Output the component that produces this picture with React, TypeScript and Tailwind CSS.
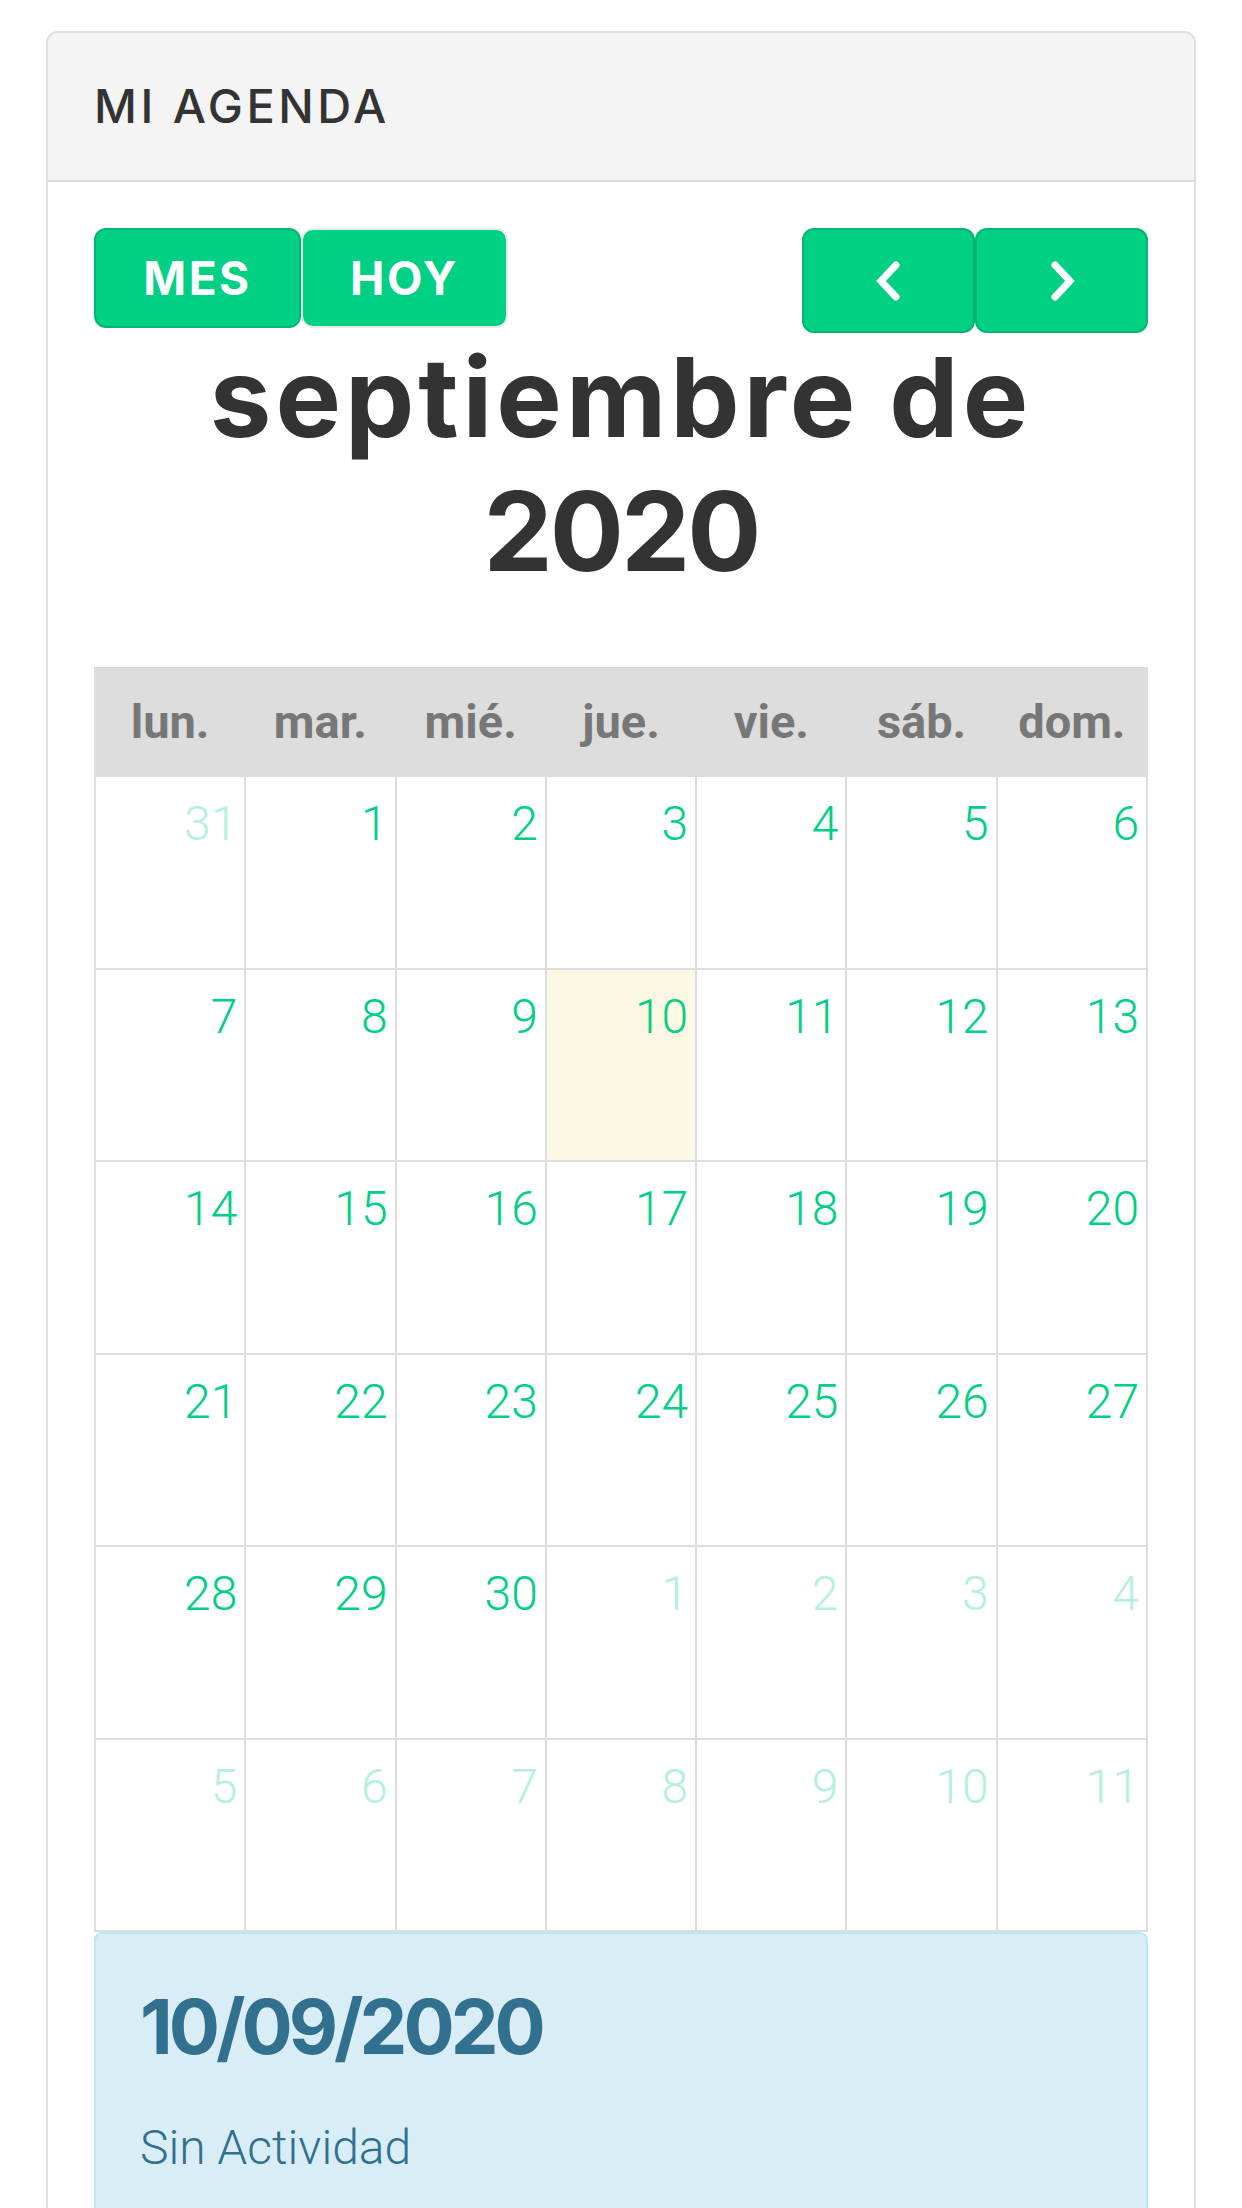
import { ReactNode } from "react"

const weekDays = ["lun.", "mar.", "mié.", "jue.", "vie.", "sáb.", "dom."]

type Day = { n: number; other?: boolean; today?: boolean }

const weeks: Day[][] = [
    [{ n: 31, other: true }, { n: 1 }, { n: 2 }, { n: 3 }, { n: 4 }, { n: 5 }, { n: 6 }],
    [{ n: 7 }, { n: 8 }, { n: 9 }, { n: 10, today: true }, { n: 11 }, { n: 12 }, { n: 13 }],
    [{ n: 14 }, { n: 15 }, { n: 16 }, { n: 17 }, { n: 18 }, { n: 19 }, { n: 20 }],
    [{ n: 21 }, { n: 22 }, { n: 23 }, { n: 24 }, { n: 25 }, { n: 26 }, { n: 27 }],
    [{ n: 28 }, { n: 29 }, { n: 30 }, { n: 1, other: true }, { n: 2, other: true }, { n: 3, other: true }, { n: 4, other: true }],
    [5, 6, 7, 8, 9, 10, 11].map((n) => ({ n, other: true })),
]

const GreenButton = ({ children, className }: { children: ReactNode; className: string }) => (
    <button
        className={`flex items-center justify-center rounded-[12px] bg-[#00d084] border-2 border-[#02b672] text-white ${className}`}>
        {children}
    </button>
)

const Chevron = ({ left }: { left?: boolean }) => (
    <svg width="30" height="42" viewBox="0 0 30 42">
        <polyline
            points={left ? "22,5 7,21 22,37" : "8,5 23,21 8,37"}
            fill="none"
            stroke="#fff"
            strokeWidth="7"
            strokeLinecap="round"
            strokeLinejoin="miter"
        />
    </svg>
)

const App = () => {
    return (
        <div className="min-h-screen bg-white pt-[31px] px-[46px] font-['Inter',sans-serif]">
            <div className="border-2 border-[#dddddd] rounded-[12px] overflow-hidden">
                {/* card header */}
                <div className="h-[149px] bg-[#f4f4f4] border-b-2 border-[#dddddd] flex items-center px-[46px]">
                    <span className="text-[47px] font-medium text-[#333333] tracking-[3.5px]">MI AGENDA</span>
                </div>

                <div className="px-[46px] pt-[46px]">
                    {/* toolbar */}
                    <div className="flex justify-between items-start">
                        <div className="flex">
                            <GreenButton className="w-[207px] h-[100px] text-[46px] font-bold tracking-[2.5px]">MES</GreenButton>
                            <GreenButton className="w-[207px] h-[100px] text-[46px] font-bold tracking-[2.5px] border-[#e4ecea]">HOY</GreenButton>
                        </div>
                        <div className="flex">
                            <GreenButton className="w-[173px] h-[105px]">
                                <Chevron left />
                            </GreenButton>
                            <GreenButton className="w-[173px] h-[105px]">
                                <Chevron />
                            </GreenButton>
                        </div>
                    </div>

                    <h2 className="text-center text-[110px] leading-[134px] font-bold text-[#333333] tracking-[4px] -mt-[3px] px-[40px]">
                        septiembre de <span className="tracking-[-3px]">2020</span>
                    </h2>

                    {/* calendar grid */}
                    <div className="mt-[69px] border-l-2 border-t-2 border-[#dddddd] font-['Roboto',sans-serif]">
                        <div className="grid grid-cols-7 bg-[#dddddd]">
                            {weekDays.map((d) => (
                                <div
                                    key={d}
                                    className="h-[108px] flex items-center justify-center border-r-2 border-b-2 border-[#dddddd] text-[47px] font-bold text-[#777777]">
                                    {d}
                                </div>
                            ))}
                        </div>
                        {weeks.map((week, i) => (
                            <div key={i} className="grid grid-cols-7">
                                {week.map((day, j) => (
                                    <div
                                        key={j}
                                        className={`h-[192.5px] border-r-2 border-b-2 border-[#dddddd] flex justify-end pr-[7px] pt-[17px] ${
                                            day.today ? "bg-[#fcf8e3]" : "bg-white"
                                        }`}>
                                        <span
                                            className={`text-[48px] font-light leading-[60px] ${
                                                day.other ? "text-[#b3f1da]" : "text-[#00d084]"
                                            }`}>
                                            {day.n}
                                        </span>
                                    </div>
                                ))}
                            </div>
                        ))}
                    </div>

                    {/* selected day */}
                    <div className="bg-[#d9edf7] border-2 border-[#bce8f1] rounded-[8px] px-[44px] pt-[44px] pb-[80px] text-[#31708f]">
                        <div className="text-[76px] leading-[96px] font-bold tracking-[-4px]">10/09/2020</div>
                        <div className="mt-[38px] text-[48px] font-light font-['Roboto',sans-serif]">Sin Actividad</div>
                    </div>
                </div>
            </div>
        </div>
    )
}

export default App
